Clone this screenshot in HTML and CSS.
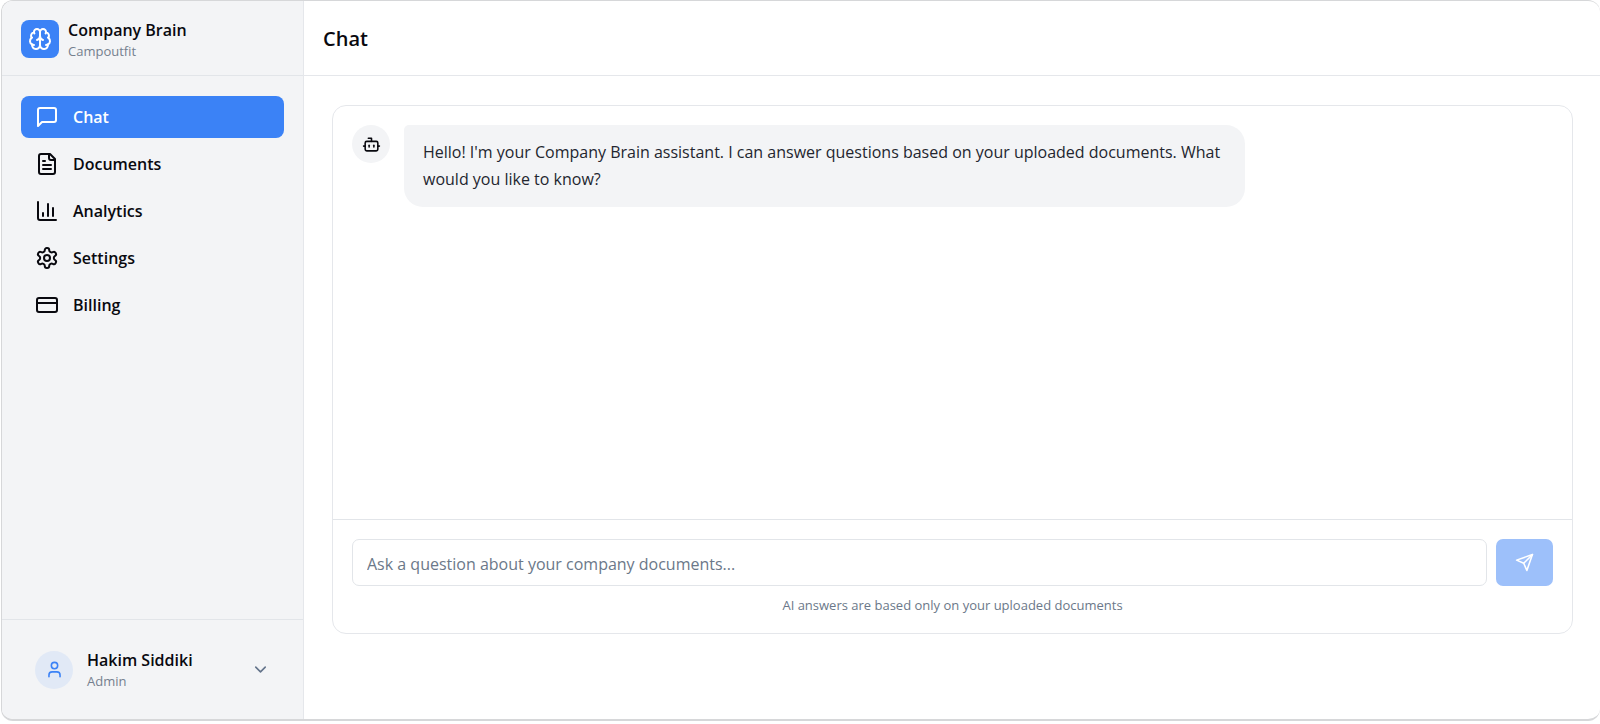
FILE: index.html
```html
<!DOCTYPE html>
<html lang="en">
<head>
    <meta charset="UTF-8">
    <meta name="viewport" content="width=device-width, initial-scale=1.0">
    <title>Company Brain - Chat</title>
    <link rel="stylesheet" href="styles.css">
</head>
<body>
<div class="app">
    <aside class="sidebar">
        <div class="brand">
            <div class="brand-logo">
                <svg class="icon icon-lg" viewBox="0 0 24 24">
                    <path d="M12 5a3 3 0 1 0-5.997.125 4 4 0 0 0-2.526 5.77 4 4 0 0 0 .556 6.588A4 4 0 1 0 12 18Z"/>
                    <path d="M12 5a3 3 0 1 1 5.997.125 4 4 0 0 1 2.526 5.77 4 4 0 0 1-.556 6.588A4 4 0 1 1 12 18Z"/>
                    <path d="M15 13a4.5 4.5 0 0 1-3-4 4.5 4.5 0 0 1-3 4"/>
                    <path d="M17.599 6.5a3 3 0 0 0 .399-1.375"/>
                    <path d="M6.003 5.125A3 3 0 0 0 6.401 6.5"/>
                    <path d="M3.477 10.896a4 4 0 0 1 .585-.396"/>
                    <path d="M19.938 10.5a4 4 0 0 1 .585.396"/>
                    <path d="M6 18a4 4 0 0 1-1.967-.516"/>
                    <path d="M19.967 17.484A4 4 0 0 1 18 18"/>
                </svg>
            </div>
            <div>
                <div class="name">Company Brain</div>
                <div class="sub">Campoutfit</div>
            </div>
        </div>

        <nav class="nav">
            <a href="#chat" class="nav-link active" aria-current="page">
                <svg class="icon icon-lg" viewBox="0 0 24 24">
                    <path d="M21 15a2 2 0 0 1-2 2H7l-4 4V5a2 2 0 0 1 2-2h14a2 2 0 0 1 2 2z"/>
                </svg>
                Chat
            </a>
            <a href="#documents" class="nav-link">
                <svg class="icon icon-lg" viewBox="0 0 24 24">
                    <path d="M15 2H6a2 2 0 0 0-2 2v16a2 2 0 0 0 2 2h12a2 2 0 0 0 2-2V7Z"/>
                    <path d="M14 2v4a2 2 0 0 0 2 2h4"/>
                    <path d="M10 9H8"/>
                    <path d="M16 13H8"/>
                    <path d="M16 17H8"/>
                </svg>
                Documents
            </a>
            <a href="#analytics" class="nav-link">
                <svg class="icon icon-lg" viewBox="0 0 24 24">
                    <path d="M3 3v16a2 2 0 0 0 2 2h16"/>
                    <path d="M18 17V9"/>
                    <path d="M13 17V5"/>
                    <path d="M8 17v-3"/>
                </svg>
                Analytics
            </a>
            <a href="#settings" class="nav-link">
                <svg class="icon icon-lg" viewBox="0 0 24 24">
                    <path d="M12.22 2h-.44a2 2 0 0 0-2 2v.18a2 2 0 0 1-1 1.73l-.43.25a2 2 0 0 1-2 0l-.15-.08a2 2 0 0 0-2.73.73l-.22.38a2 2 0 0 0 .73 2.73l.15.1a2 2 0 0 1 1 1.72v.51a2 2 0 0 1-1 1.74l-.15.09a2 2 0 0 0-.73 2.73l.22.38a2 2 0 0 0 2.73.73l.15-.08a2 2 0 0 1 2 0l.43.25a2 2 0 0 1 1 1.73V20a2 2 0 0 0 2 2h.44a2 2 0 0 0 2-2v-.18a2 2 0 0 1 1-1.73l.43-.25a2 2 0 0 1 2 0l.15.08a2 2 0 0 0 2.73-.73l.22-.39a2 2 0 0 0-.73-2.73l-.15-.08a2 2 0 0 1-1-1.74v-.5a2 2 0 0 1 1-1.74l.15-.09a2 2 0 0 0 .73-2.73l-.22-.38a2 2 0 0 0-2.73-.73l-.15.08a2 2 0 0 1-2 0l-.43-.25a2 2 0 0 1-1-1.73V4a2 2 0 0 0-2-2z"/>
                    <circle cx="12" cy="12" r="3"/>
                </svg>
                Settings
            </a>
            <a href="#billing" class="nav-link">
                <svg class="icon icon-lg" viewBox="0 0 24 24">
                    <rect width="20" height="14" x="2" y="5" rx="2"/>
                    <path d="M2 10h20"/>
                </svg>
                Billing
            </a>
        </nav>

        <div class="account">
            <button type="button" class="account-button">
                <span class="avatar avatar-user">
                    <svg class="icon" viewBox="0 0 24 24">
                        <path d="M19 21v-2a4 4 0 0 0-4-4H9a4 4 0 0 0-4 4v2"/>
                        <circle cx="12" cy="7" r="4"/>
                    </svg>
                </span>
                <span class="account-text">
                    <span class="name">Hakim Siddiki</span>
                    <span class="sub">Admin</span>
                </span>
                <svg class="icon chevron" viewBox="0 0 24 24">
                    <path d="m6 9 6 6 6-6"/>
                </svg>
            </button>
        </div>
    </aside>

    <main class="main">
        <header class="topbar">
            <h1>Chat</h1>
        </header>
        <div class="content">
            <section class="chat">
                <div class="messages">
                    <div class="message">
                        <div class="avatar avatar-bot">
                            <svg class="icon" viewBox="0 0 24 24">
                                <path d="M12 8V4H8"/>
                                <rect width="16" height="12" x="4" y="8" rx="2"/>
                                <path d="M2 14h2"/>
                                <path d="M20 14h2"/>
                                <path d="M15 13v2"/>
                                <path d="M9 13v2"/>
                            </svg>
                        </div>
                        <p class="bubble">Hello! I'm your Company Brain assistant. I can answer questions based on your uploaded documents. What would you like to know?</p>
                    </div>
                </div>
                <div class="composer">
                    <form class="composer-form">
                        <input type="text" class="question" aria-label="Question" placeholder="Ask a question about your company documents...">
                        <button type="submit" class="send" aria-label="Send" disabled>
                            <svg class="icon" viewBox="0 0 24 24">
                                <path d="m22 2-7 20-4-9-9-4Z"/>
                                <path d="M22 2 11 13"/>
                            </svg>
                        </button>
                    </form>
                    <p class="hint">AI answers are based only on your uploaded documents</p>
                </div>
            </section>
        </div>
    </main>
</div>
</body>
</html>
```
FILE: styles.css
```css
* {
    box-sizing: border-box;
}
body {
    margin: 0;
    padding: 0 0 3px 1px;
    background: #fff;
    color: #09090f;
    font-family: "Segoe UI", "Open Sans", sans-serif;
    font-size: 16px;
    line-height: 24px;
}
h1, p {
    margin: 0;
}
button, input {
    font: inherit;
    color: inherit;
}
.app {
    display: flex;
    min-height: calc(100vh - 3px);
    border: 1px solid #d6d7d9;
    border-bottom-width: 2px;
    border-right: none;
    border-radius: 12px;
    overflow: hidden;
}
.icon {
    width: 19px;
    height: 19px;
    flex-shrink: 0;
    fill: none;
    stroke: currentColor;
    stroke-width: 2;
    stroke-linecap: round;
    stroke-linejoin: round;
}
.icon-lg {
    width: 24px;
    height: 24px;
}

/* Sidebar */
.sidebar {
    display: flex;
    flex-direction: column;
    width: 302px;
    flex-shrink: 0;
    background: #f3f4f6;
    border-right: 1px solid #e5e7eb;
}
.brand {
    display: flex;
    align-items: center;
    gap: 9px;
    height: 75px;
    padding: 2px 19px 0;
    border-bottom: 1px solid #e2e5e9;
}
.brand-logo {
    display: flex;
    align-items: center;
    justify-content: center;
    width: 38px;
    height: 38px;
    border-radius: 8px;
    background: #3b82f6;
    color: #fff;
}
.name {
    display: block;
    font-size: 16px;
    font-weight: 600;
    line-height: 24px;
}
.sub {
    display: block;
    font-size: 13px;
    line-height: 19px;
    color: #75808e;
}
.nav {
    display: flex;
    flex: 1;
    flex-direction: column;
    gap: 5px;
    padding: 20px 19px;
}
.nav-link {
    display: flex;
    align-items: center;
    gap: 14px;
    height: 42px;
    padding: 0 14px;
    border-radius: 8px;
    color: inherit;
    font-weight: 600;
    text-decoration: none;
}
.nav-link.active {
    background: #3b82f6;
    color: #fff;
}
.account {
    padding: 19px;
    border-top: 1px solid #e2e5e9;
}
.account-button {
    display: flex;
    align-items: center;
    gap: 14px;
    width: 100%;
    padding: 9px 14px;
    border: none;
    background: none;
    text-align: left;
    cursor: pointer;
}
.account-text {
    flex: 1;
}
.chevron {
    color: #64748b;
}
.avatar {
    display: flex;
    align-items: center;
    justify-content: center;
    width: 38px;
    height: 38px;
    flex-shrink: 0;
    border-radius: 50%;
}
.avatar-user {
    background: #e1e9f6;
    color: #3b82f6;
}
.avatar-bot {
    background: #f3f4f6;
}

/* Main */
.main {
    display: flex;
    flex: 1;
    flex-direction: column;
    min-width: 0;
}
.topbar {
    display: flex;
    align-items: center;
    height: 75px;
    padding: 2px 19px 0;
    border-bottom: 1px solid #e5e7eb;
}
h1 {
    font-size: 20px;
    font-weight: 600;
    line-height: 28px;
}
.content {
    display: flex;
    flex: 1;
    padding: 29px 27px 85px 28px;
}
.chat {
    display: flex;
    flex: 1;
    flex-direction: column;
    border: 1px solid #e5e7eb;
    border-radius: 14px;
}
.messages {
    flex: 1;
    padding: 19px;
}
.message {
    display: flex;
    gap: 14px;
}
.bubble {
    max-width: 70%;
    padding: 14px 19px;
    border-radius: 5px 19px 19px 19px;
    background: #f3f4f6;
    color: #23262f;
    line-height: 27px;
}
.composer {
    padding: 19px 19px 18px;
    border-top: 1px solid #e2e5e9;
}
.composer-form {
    display: flex;
    gap: 9px;
}
.question {
    flex: 1;
    min-width: 0;
    height: 47px;
    padding: 2px 14px 0;
    border: 1px solid #e2e5e9;
    border-radius: 7px;
    background: #fff;
}
.question::placeholder {
    color: #6b7889;
    opacity: 1;
}
.send {
    display: flex;
    align-items: center;
    justify-content: center;
    width: 57px;
    height: 47px;
    padding: 0;
    border: none;
    border-radius: 7px;
    background: #9dc0fa;
    color: #fff;
}
.hint {
    margin-top: 10px;
    color: #6b7889;
    font-size: 13px;
    line-height: 19px;
    text-align: center;
}
```
